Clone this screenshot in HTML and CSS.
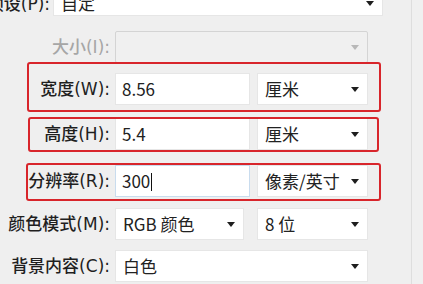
FILE: index.html
```html
<!DOCTYPE html>
<html lang="zh">
<head>
<meta charset="utf-8">
<link rel="stylesheet" href="styles.css">
</head>
<body>
<div class="page">
  <div class="form">
    <div class="row top">
      <span class="label label-top">预设(P):</span>
      <div class="field select wide-top"><span class="val">自定</span><span class="arrow"></span></div>
    </div>
    <div class="row r-size">
      <span class="label disabled">大小(I):</span>
      <div class="field select wide disabled-field"><span class="val"></span><span class="arrow grey"></span></div>
    </div>
    <div class="row r-w">
      <span class="label">宽度(W):</span>
      <div class="field input"><span class="val">8.56</span></div>
      <div class="field select unit"><span class="val">厘米</span><span class="arrow"></span></div>
    </div>
    <div class="row r-h">
      <span class="label">高度(H):</span>
      <div class="field input"><span class="val">5.4</span></div>
      <div class="field select unit"><span class="val">厘米</span><span class="arrow"></span></div>
    </div>
    <div class="row r-r">
      <span class="label">分辨率(R):</span>
      <div class="field input focused"><span class="val">300<span class="caret"></span></span></div>
      <div class="field select unit"><span class="val">像素/英寸</span><span class="arrow"></span></div>
    </div>
    <div class="row r-m">
      <span class="label">颜色模式(M):</span>
      <div class="field select mode"><span class="val">RGB 颜色</span><span class="arrow"></span></div>
      <div class="field select unit"><span class="val">8 位</span><span class="arrow"></span></div>
    </div>
    <div class="row r-c">
      <span class="label">背景内容(C):</span>
      <div class="field select wide"><span class="val">白色</span><span class="arrow"></span></div>
    </div>
  </div>
  <div class="side"></div>
</div>
<div class="mark mark-1"></div>
<div class="mark mark-2"></div>
<div class="mark mark-3"></div>
</body>
</html>
```
FILE: styles.css
```css
html, body {
  margin: 0;
  padding: 0;
}
body {
  width: 423px;
  height: 284px;
  overflow: hidden;
  position: relative;
  background: #efefef;
  font-family: "Noto Sans CJK SC", "Microsoft YaHei", sans-serif;
  font-size: 17px;
  color: #222222;
}
.page {
  display: flex;
  height: 284px;
}
.form {
  width: 411px;
  flex: none;
}
.side {
  flex: 1;
  border-left: 1px solid #dedede;
  background: #f0f0f0;
}
.row {
  display: flex;
  align-items: center;
  height: 32px;
}
.label {
  width: 110px;
  margin-right: 5px;
  display: flex;
  justify-content: flex-end;
  white-space: nowrap;
  flex: none;
  line-height: 20px;
  font-family: "DejaVu Sans", "Noto Sans CJK SC", sans-serif;
  font-weight: 500;
  color: #1f1f1f;
}
.label.disabled {
  color: #a6a6a6;
}
.row.top {
  margin-top: -16px;
  align-items: flex-end;
}
.label-top {
  width: 50px;
  margin-right: 3px;
  padding-bottom: 2px;
}
.row.top .field {
  align-items: flex-end;
  padding-bottom: 2px;
}
.row.top .arrow {
  margin-bottom: 7px;
}
.r-size { margin-top: 15px; }
.r-w { margin-top: 10px; }
.r-h { margin-top: 13px; }
.r-r { margin-top: 15px; }
.r-m { margin-top: 11px; }
.r-c { margin-top: 10px; }

.field {
  box-sizing: border-box;
  height: 32px;
  background: #ffffff;
  border: 1px solid #e6e6e6;
  display: flex;
  align-items: center;
  padding: 0 6px;
  flex: none;
}
.field .val {
  flex: 1;
  white-space: nowrap;
  line-height: 20px;
}
.select {
  padding: 0 8px 0 7px;
}
.wide-top { width: 330px; }
.wide { width: 253px; }
.input { width: 135px; }
.unit {
  width: 111px;
  margin-left: 7px;
}
.mode { width: 129px; }
.mode + .unit { margin-left: 13px; }
.disabled-field {
  background: #f0f0f0;
  border-color: #d4d4d4;
  border-radius: 2px;
}
.focused {
  border-color: #c9dcee;
}
.caret {
  display: inline-block;
  width: 1px;
  height: 18px;
  background: #111;
  vertical-align: -3px;
  margin-left: 1px;
}
.arrow {
  width: 0;
  height: 0;
  border-left: 4px solid transparent;
  border-right: 4px solid transparent;
  border-top: 5px solid #1e1e1e;
  flex: none;
}
.arrow.grey {
  border-top-color: #b8b8b8;
}
.mark {
  position: absolute;
  box-sizing: border-box;
  border: 2px solid #d8252b;
  border-radius: 3px;
}
.mark-1 { left: 27px; top: 62px; width: 354px; height: 50px; }
.mark-2 { left: 28px; top: 117px; width: 351px; height: 35px; }
.mark-3 { left: 26px; top: 163px; width: 355px; height: 38px; }
```
